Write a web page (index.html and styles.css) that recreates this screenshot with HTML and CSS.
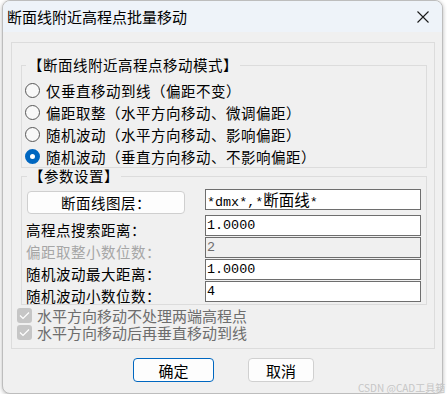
FILE: index.html
```html
<!DOCTYPE html>
<html>
<head>
<meta charset="utf-8">
<link rel="stylesheet" href="styles.css">
</head>
<body>
<div class="window">
  <div class="titlebar">
    <span class="title">断面线附近高程点批量移动</span>
    <svg class="close" width="12" height="12" viewBox="0 0 12 12"><path d="M0.5 0.5 L11.5 11.5 M11.5 0.5 L0.5 11.5" stroke="#1a1a1a" stroke-width="1.1" fill="none"/></svg>
  </div>
  <div class="client">
    <div class="frame">
      <fieldset class="group g-mode">
        <legend>【断面线附近高程点移动模式】</legend>
        <div class="radio"><span class="dot"></span><span>仅垂直移动到线（偏距不变）</span></div>
        <div class="radio"><span class="dot"></span><span>偏距取整（水平方向移动、微调偏距）</span></div>
        <div class="radio"><span class="dot"></span><span>随机波动（水平方向移动、影响偏距）</span></div>
        <div class="radio on"><span class="dot"></span><span>随机波动（垂直方向移动、不影响偏距）</span></div>
      </fieldset>
      <fieldset class="group g-param">
        <legend>【参数设置】</legend>
        <div class="params">
          <div class="layerbtn">断面线图层：</div>
          <div class="field">*dmx*,*<span class="cjk">断面线</span>*</div>
          <div class="lbl">高程点搜索距离：</div>
          <div class="field">1.0000</div>
          <div class="lbl dis">偏距取整小数位数：</div>
          <div class="field dis">2</div>
          <div class="lbl">随机波动最大距离：</div>
          <div class="field">1.0000</div>
          <div class="lbl">随机波动小数位数：</div>
          <div class="field">4</div>
        </div>
      </fieldset>
      <div class="check first"><span class="box"><svg width="11" height="9" viewBox="0 0 11 9"><path d="M1 4.5 L4 7.5 L10 1.5" stroke="#fff" stroke-width="1.2" fill="none"/></svg></span><span>水平方向移动不处理两端高程点</span></div>
      <div class="check"><span class="box"><svg width="11" height="9" viewBox="0 0 11 9"><path d="M1 4.5 L4 7.5 L10 1.5" stroke="#fff" stroke-width="1.2" fill="none"/></svg></span><span>水平方向移动后再垂直移动到线</span></div>
    </div>
    <div class="buttons">
      <div class="btn ok">确定</div>
      <div class="btn cancel">取消</div>
    </div>
  </div>
</div>
<div class="watermark">CSDN @CAD工具箱</div>
</body>
</html>
```

FILE: styles.css
```css
html, body {
  margin: 0;
  background: #ffffff;
}
body {
  position: relative;
  font-family: "Noto Sans CJK SC", sans-serif;
  color: #000;
}
.window {
  margin-left: 2px;
  width: 441px;
  height: 394px;
  box-sizing: border-box;
  border: 1px solid #bdbdbd;
  border-radius: 8px;
  background: #f0f0f0;
  box-shadow: 0 1px 4px rgba(0, 0, 0, 0.28);
}
.titlebar {
  height: 31px;
  display: flex;
  align-items: center;
  justify-content: space-between;
  padding: 0 13px 0 4px;
  background: #eef3f9;
  border-radius: 7px 7px 0 0;
}
.title {
  font-size: 15px;
  line-height: 20px;
}
.client {
  padding: 10px 7px 0 8px;
}
.frame {
  border: 1px solid #dcdcdc;
  padding: 14px 7px 7px 9px;
}
fieldset.group {
  margin: 0;
  border: 1px solid #dcdcdc;
  min-width: 0;
}
legend {
  padding: 0 2px;
  margin-left: 1px;
  line-height: 16px;
  font-size: 14.5px;
  letter-spacing: 0.5px;
}
.g-mode {
  padding: 6px 0 0 3px;
}
.g-param {
  margin-top: 5px;
  padding: 5px 4px 1px 4px;
}
.radio {
  display: flex;
  align-items: center;
  gap: 6px;
  height: 22px;
  font-size: 14.5px;
  letter-spacing: 0.5px;
  white-space: nowrap;
}
.dot {
  width: 13px;
  height: 13px;
  border: 1px solid #575757;
  border-radius: 50%;
  background: #f8f8f8;
  flex: none;
}
.radio.on .dot {
  width: 5px;
  height: 5px;
  border: 5px solid #0067c0;
  background: #ffffff;
}
.params {
  display: grid;
  grid-template-columns: 179px 216px;
  grid-template-rows: 26px 22px 22px 22px 22px;
}
.layerbtn {
  margin: 2px 20px 0 1px;
  height: 23px;
  box-sizing: border-box;
  border: 1px solid #cfcfcf;
  border-radius: 4px;
  background: #fdfdfd;
  display: flex;
  align-items: center;
  justify-content: center;
  font-size: 14.5px;
  letter-spacing: 0.5px;
}
.lbl {
  margin-top: 4px;
  line-height: 22px;
  font-size: 14.5px;
  letter-spacing: 0.5px;
  white-space: nowrap;
}
.lbl.dis {
  color: #a6a6a6;
}
.field {
  align-self: start;
  height: 21px;
  box-sizing: border-box;
  border: 1px solid #6e6e6e;
  background: #ffffff;
  font-family: "Liberation Mono", "Noto Sans CJK SC", monospace;
  font-size: 13.4px;
  line-height: 19px;
  padding-left: 1px;
  white-space: nowrap;
  overflow: hidden;
}
.field .cjk {
  font-family: "Noto Sans CJK SC", sans-serif;
  font-size: 15.5px;
}
.field.dis {
  background: #f0f0f0;
  color: #6d6d6d;
}
.check {
  display: flex;
  align-items: center;
  gap: 5px;
  height: 17px;
  margin-left: -4px;
  font-size: 15px;
  line-height: 17px;
  color: #6d6d6d;
  white-space: nowrap;
}
.check.first {
  margin-top: 2px;
}
.box {
  width: 15px;
  height: 15px;
  border-radius: 3px;
  background: #c6c6c6;
  display: flex;
  align-items: center;
  justify-content: center;
  flex: none;
}
.buttons {
  display: flex;
  gap: 34px;
  margin-top: 9px;
  padding-left: 122px;
}
.btn {
  height: 24px;
  box-sizing: border-box;
  border: 1px solid #d0d0d0;
  border-radius: 4px;
  background: #fdfdfd;
  display: flex;
  align-items: center;
  justify-content: center;
  font-size: 15px;
}
.btn.ok {
  width: 81px;
  border-color: #0067c0;
}
.btn.cancel {
  width: 66px;
}
.watermark {
  position: absolute;
  left: 358px;
  top: 381px;
  font-size: 10px;
  line-height: 14px;
  color: #c6c6c6;
  white-space: nowrap;
}
```
